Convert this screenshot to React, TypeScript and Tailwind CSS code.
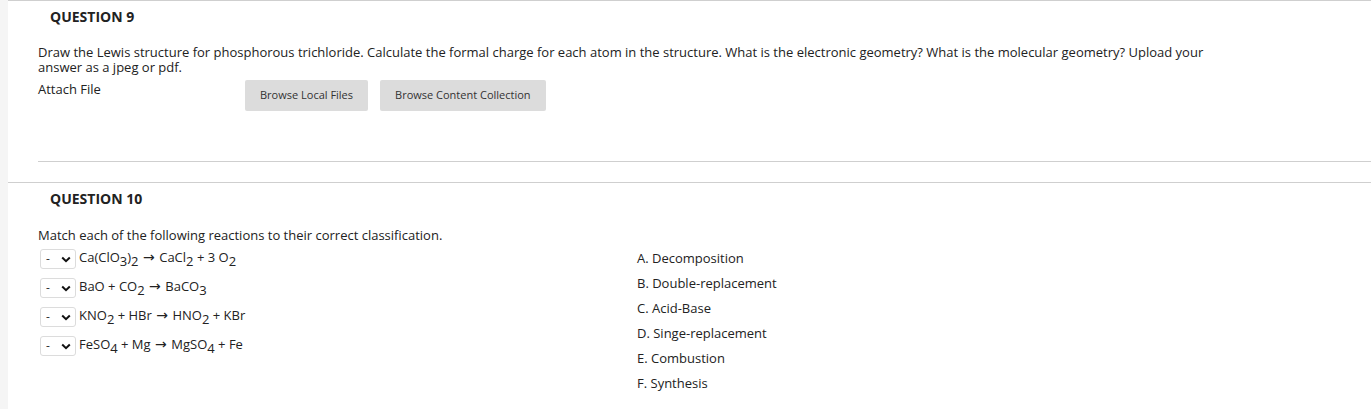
import React from "react";

const Sub = ({ children }: { children: React.ReactNode }) => (
  <sub className="text-[13px] relative top-[4px] align-baseline">{children}</sub>
);

const Arrow = () => (
  <span className="text-[14px] leading-[15px]" style={{ fontFamily: '"DejaVu Sans", sans-serif' }}> → </span>
);

const Sel = () => (
  <div className="w-[36px] h-[20px] border border-[#dcdcdc] rounded-[3px] bg-white flex items-center justify-between pl-[5px] pr-[4px] text-[12px] text-[#333]">
    <span>-</span>
    <svg width="10" height="7" viewBox="0 0 10 7">
      <path d="M1.2 1.5 L5 5.2 L8.8 1.5" fill="none" stroke="#111" strokeWidth="2" />
    </svg>
  </div>
);

const reactions: React.ReactNode[] = [
  <>Ca(ClO<Sub>3</Sub>)<Sub>2</Sub><Arrow />CaCl<Sub>2</Sub> + 3 O<Sub>2</Sub></>,
  <>BaO + CO<Sub>2</Sub><Arrow />BaCO<Sub>3</Sub></>,
  <>KNO<Sub>2</Sub> + HBr<Arrow />HNO<Sub>2</Sub> + KBr</>,
  <>FeSO<Sub>4</Sub> + Mg<Arrow />MgSO<Sub>4</Sub> + Fe</>,
];

const answers = [
  "A. Decomposition",
  "B. Double-replacement",
  "C. Acid-Base",
  "D. Singe-replacement",
  "E. Combustion",
  "F. Synthesis",
];

export default function App() {
  return (
    <div
      className="flex w-[1371px] h-[409px] bg-white text-[#333] text-[13px] overflow-hidden"
      style={{ fontFamily: '"Open Sans", "Noto Sans", sans-serif' }}
    >
      <div className="w-[8px] bg-[#f5f5f5] shrink-0" />
      <div className="flex-1 flex flex-col">
        <div className="border-t border-[#cfcfcf]">
          <div className="pl-[42px] pt-[7px] font-bold text-[#222] text-[14px] leading-[18px]">QUESTION 9</div>
          <div className="pl-[30px] pt-[19px] w-[1200px] leading-[15px] text-[#222]">
            Draw the Lewis structure for phosphorous trichloride. Calculate the formal charge for each atom in the structure. What is the electronic geometry? What is the molecular geometry? Upload your answer as a jpeg or pdf.
          </div>
          <div className="flex pl-[30px] pt-[5px]">
            <div className="w-[207px] pt-[2px] leading-[15px] text-[#222]">Attach File</div>
            <div className="flex gap-[12px]">
              <div className="h-[31px] px-[15px] bg-[#dcdcdc] rounded-[2px] flex items-center text-[11px] text-[#333]">Browse Local Files</div>
              <div className="h-[31px] px-[15px] bg-[#dcdcdc] rounded-[2px] flex items-center text-[11px] text-[#333]">Browse Content Collection</div>
            </div>
          </div>
          <div className="ml-[30px] mt-[50px] border-b border-[#cfcfcf]" />
          <div className="h-[20px]" />
        </div>
        <div className="border-t border-[#cfcfcf]">
          <div className="pl-[42px] pt-[7px] font-bold text-[#222] text-[14px] leading-[18px]">QUESTION 10</div>
          <div className="pl-[30px] pt-[20px] leading-[15px] text-[#222]">
            Match each of the following reactions to their correct classification.
          </div>
          <div className="flex pl-[32px]">
            <div className="w-[597px] flex flex-col gap-[9px] pt-[6px]">
              {reactions.map((r, i) => (
                <div key={i} className="flex items-center gap-[3px] h-[20px]">
                  <Sel />
                  <span className="text-[#222] text-[13px] leading-[15px] -mt-[3px] whitespace-pre">{r}</span>
                </div>
              ))}
            </div>
            <div className="flex flex-col gap-[10px] pt-[8px]">
              {answers.map((a) => (
                <div key={a} className="leading-[15px] text-[#222] text-[13px]">{a}</div>
              ))}
            </div>
          </div>
        </div>
      </div>
    </div>
  );
}
